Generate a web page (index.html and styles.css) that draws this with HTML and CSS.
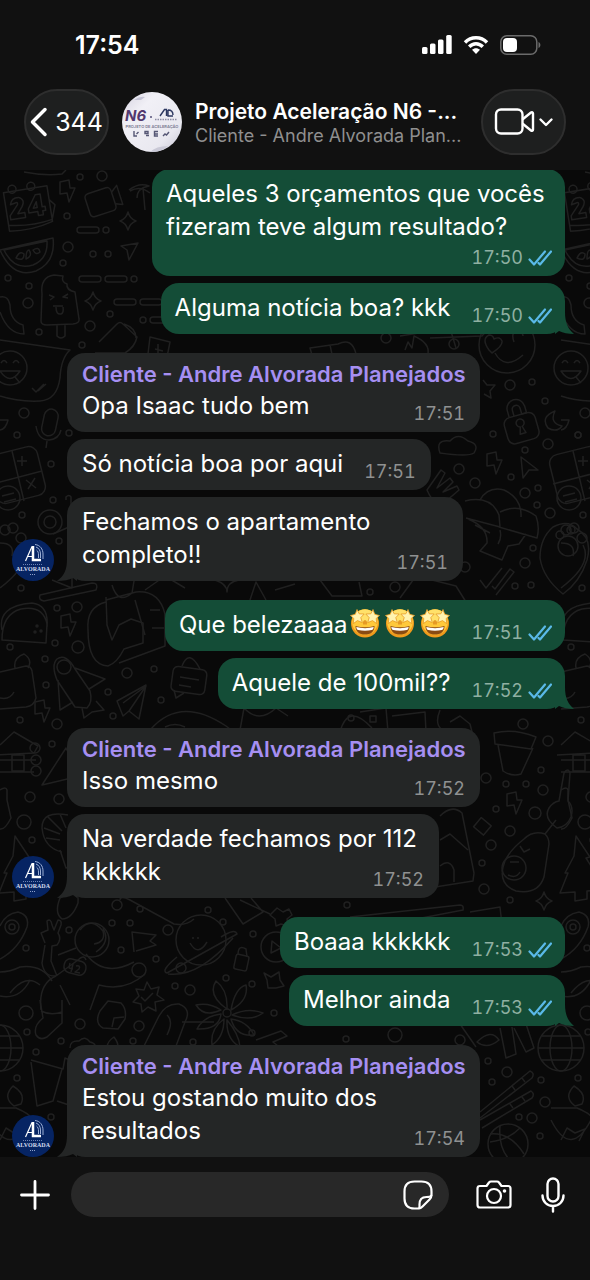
FILE: index.html
```
<!DOCTYPE html>
<html lang="pt-BR">
<head>
<meta charset="UTF-8">
<meta name="viewport" content="width=device-width, initial-scale=1.0">
<title>Projeto Aceleração N6</title>
<link rel="stylesheet" href="styles.css">
</head>
<body>

<!-- shared symbols -->
<svg class="defs" aria-hidden="true">
    <symbol id="checks" viewBox="0 0 24 16">
        <path d="M1.500 9.500l4.500 5L17 1.500M10.500 13l1.500 1.500L23 1.500" fill="none" stroke="#5ab9e8" stroke-width="2.200" stroke-linecap="round" stroke-linejoin="round"/>
    </symbol>
    <symbol id="tail-out" viewBox="0 0 20 22">
        <path d="M10 0C10 11 13 17 19 22C13 22 8 21 4 19L0 22V0z" fill="#144d37"/>
    </symbol>
    <symbol id="tail-in" viewBox="0 0 20 22">
        <path d="M10 0C10 11 7 17 0 22C7 22 12 21 16 19L20 22V0z" fill="#242626"/>
    </symbol>
    <symbol id="alvorada" viewBox="0 0 42 42">
        <circle cx="21" cy="21" r="21" fill="#062463"/>
        <g fill="none" stroke="#fff">
            <path d="M13.500 22L20 7.500" stroke-width="1.200"/>
            <path d="M16 17.500h4.500" stroke-width="1"/>
            <path d="M21 7v14h8" stroke-width="2.500"/>
            <path d="M23 5.500c5 .5 8 4.500 8 9.500v5M24 8c3 1 4.500 4 4.500 7v4M24.500 11c1.500 1 2 3 2 5v3" stroke-width="1" stroke="#9db0d6"/>
            <path d="M11 25.500h20" stroke-width="1" stroke="#6d83b5" stroke-dasharray="1 1"/>
            <path d="M18 35.500h6" stroke-width="1" stroke="#8ea1cb" stroke-dasharray="1 1"/>
        </g>
        <text x="21" y="32" text-anchor="middle" class="logo-word">ALVORADA</text>
    </symbol>
    <symbol id="starstruck" viewBox="0 0 30 30">
        <circle cx="15" cy="15.500" r="14" fill="#f09a1c"/>
        <circle cx="15" cy="14" r="12.800" fill="#ffc93b"/>
        <ellipse cx="15" cy="8" rx="9.500" ry="6.500" fill="#ffe16a"/>
        <path d="M5.500 18c6 1.800 13 1.800 19 0c0 6-4 8.500-9.500 8.500s-9.500-2.500-9.500-8.500z" fill="#8a4a12"/>
        <path d="M6.300 19c5.500 1.500 12 1.500 17.400 0c-.2 2-1 2.800-2 3c-4 1-9.400 1-13.400 0c-1-.2-1.800-1-2-3z" fill="#fff"/>
        <path d="M13 13.500q2-3 4 0v3h-4z" fill="#e69a25"/>
        <g fill="#fff3b0" stroke="#e69a25" stroke-width=".8" stroke-linejoin="round">
            <path d="M7 1.500l2.200 4.300 5 .2-3.400 3.600 1.500 5-4.800-2-4.200 3 .5-5.200L.5 7.500l4.800-1.200z"/>
            <path d="M23 1.500l-2.200 4.300-5 .2 3.400 3.600-1.500 5 4.800-2 4.200 3-.5-5.200 3.300-2.900-4.800-1.200z"/>
        </g>
    </symbol>
</svg>

<header class="top">
    <div class="status">
        <time class="clock">17:54</time>
        <div class="status-icons">
            <svg width="30" height="20" viewBox="0 0 30 20" fill="#fff" aria-hidden="true">
                <rect x="0" y="12" width="5.500" height="7" rx="1.500"/>
                <rect x="8" y="8.500" width="5.500" height="10.500" rx="1.500"/>
                <rect x="16" y="4.500" width="5.500" height="14.500" rx="1.500"/>
                <rect x="24.200" y="0" width="5.500" height="19" rx="1.500"/>
            </svg>
            <svg width="26" height="20" viewBox="0 0 26 20" aria-hidden="true">
                <path d="M2 7.500C8 1.200 18 1.200 24 7.500M6.200 11.800c4-4 9.600-4 13.600 0" fill="none" stroke="#fff" stroke-width="3.400"/>
                <path d="M13 19l-4-4.200c2.200-2.200 5.800-2.200 8 0z" fill="#fff"/>
            </svg>
            <svg width="41" height="20" viewBox="0 0 41 20" aria-hidden="true">
                <rect x=".8" y=".8" width="36" height="18.400" rx="6" fill="none" stroke="#6b6b6b" stroke-width="1.500"/>
                <rect x="3" y="3" width="14" height="14" rx="4" fill="#fff"/>
                <path d="M38.500 7v6c2.500-.8 2.500-5.200 0-6z" fill="#6b6b6b"/>
            </svg>
        </div>
    </div>
    <div class="bar">
        <button class="pill back" type="button" aria-label="Voltar">
            <svg width="18" height="30" viewBox="0 0 18 30" aria-hidden="true"><path d="M15 2.500L2.500 15L15 27.500" fill="none" stroke="#fff" stroke-width="3.500" stroke-linecap="round" stroke-linejoin="round"/></svg>
            <span>344</span>
        </button>
        <svg class="group-pic" viewBox="0 0 60 60" role="img" aria-label="Foto do grupo">
            <defs>
                <linearGradient id="sheen" x1="0" y1="0" x2="1" y2="1">
                    <stop offset="0" stop-color="#d5d3e0"/>
                    <stop offset=".3" stop-color="#f1f0f6"/>
                    <stop offset=".75" stop-color="#e9e8f0"/>
                    <stop offset="1" stop-color="#c6c5d3"/>
                </linearGradient>
            </defs>
            <circle cx="30" cy="30" r="30" fill="url(#sheen)"/>
            <path d="M12 8q6-4 11-3l-4 3z" fill="#c3c2d4"/>
            <path d="M28 60q6-6 18-6-6 6-18 6z" fill="#c9c8d6"/>
            <text x="3" y="29" class="pic-n6">N6</text>
            <circle cx="29" cy="25" r="1" fill="#55507a"/>
            <path d="M38 24l4.500-6.500h2V24M46 18v6h5M46 18c3.500 0 5 2 5 5" fill="none" stroke="#2c3760" stroke-width="1.400"/>
            <path d="M33 27.500h22" stroke="#8d8da5" stroke-width="1.500" stroke-dasharray="1.500 1"/>
            <text x="30" y="36" text-anchor="middle" class="pic-line">PROJETO DE ACELERAÇÃO</text>
            <g fill="none" stroke="#565775" stroke-width="1.400">
                <path d="M12 39v5h3M14.500 42l2-2"/><path d="M23 39.500h3v2h-3zM24 43.500h3"/><path d="M36 39.500h-3.500v4.500H36M33 42h3"/><path d="M41 44l2-2 1.500 1 2.500-3"/>
            </g>
        </svg>
        <div class="titles">
            <h1>Projeto Aceleração N6 -...</h1>
            <p>Cliente - Andre Alvorada Plan...</p>
        </div>
        <button class="pill call" type="button" aria-label="Chamada de vídeo">
            <svg width="60" height="30" viewBox="0 0 60 30" fill="none" stroke="#fff" stroke-width="2.400" stroke-linecap="round" stroke-linejoin="round" aria-hidden="true">
                <rect x="2" y="2.500" width="26.500" height="24" rx="5"/>
                <path d="M29 12l8-6.500c1-.8 2-.3 2 1v16c0 1.300-1 1.800-2 1L29 17"/>
                <path d="M46.500 12.500l5.500 5.500 5.500-5.500"/>
            </svg>
        </button>
    </div>
</header>

<main class="chat">
    <!-- doodle wallpaper, repeats every 561px -->
    <svg class="wallpaper" aria-hidden="true">
        <defs>
            <path id="bolt" d="M-6-10l9-2 1 8 5 0-6 14-2-9-7 1z"/>
            <path id="spark" d="M0-9q2 7 8 9q-6 2-8 9q-2-7-8-9q6-2 8-9z"/>
            <path id="tick" d="M-18 3l6 8L4-9M-6 9l3 3L12-8l4 3L-2 18"/>
            <g id="padlock"><rect x="-16" y="-4" width="32" height="27" rx="7"/><path d="M-9-4v-7a9 9 0 0118 0v7h-5v-6a4 4 0 00-8 0v6M-3 15l2-7a4 4 0 112 0l2 7z"/></g>
            <g id="smile"><circle r="17"/><path d="M-9-5q3-5 6 0M3-5q3-5 6 0M-10 3q10 15 20 0zM5 9l5 6"/></g>
            <g id="tile">
                <g transform="translate(28 207) rotate(-9)"><path d="M-22-18h44v36q-21 6-44 3zM-22 15q22 5 44 1l5-14-5-6"/><circle cx="-13" cy="-20" r="4"/><circle cx="6" cy="-20" r="4"/><path d="M-17-5q2-7 9-6q7 3 2 10l-5 6h7v5h-15v-4l9-10q1-3-2-2zM9-11h5v13h3v4h-3v4h-5v-4H0V2zM9-4L5 2h4z"/></g>
                <use href="#bolt" x="66" y="192"/>
                <g transform="translate(101 202) rotate(-18)"><rect x="-14" y="-12" width="27" height="24" rx="4"/><path d="M13-6l7-5v20l-7-3"/></g>
                <path d="M24 172q20 4 38 2l4-4M129 190q10-8 20-4q-12 2-12 12M130 191q10-6 20 2M145 210l-2-22"/>
                <use href="#spark" x="128" y="221"/>
                <rect x="77" y="227" width="22" height="6" rx="3"/><circle cx="106" cy="230" r="3"/>
                <path d="M121 246l17-3-9 17-2-10z"/>
                <path d="M0 250l53-12q3 24-17 33Q13 279 0 250zM4 250l43-9q1 18-14 24q-19 6-29-15z"/>
                <path d="M16 258q4-8 8-4q0 8-8 4zM26 259q0-9 3-9q4 6-3 9zM33 250q6-4 7 2q-4 4-7-2z"/>
                <rect x="79" y="276" width="22" height="6" rx="3"/><rect x="105" y="276" width="22" height="6" rx="3"/><circle cx="134" cy="279" r="3"/>
                <rect x="114" y="299" width="22" height="6" rx="3"/><rect x="140" y="299" width="22" height="6" rx="3"/><circle cx="143" cy="320" r="3"/><rect x="150" y="317" width="22" height="6" rx="3"/>
                <path d="M42 294q-2-17 12-19l9 1q-2 6 4 8q-1 6 8 8l4 27q1 4-6 5l-26 1q-6 0-6-4zM57 325v11q4 4 8 0v-12"/>
                <path d="M49 295l5 2-4 3M68 294l-5 3 5 1M53 306h10M56 307q0 8 5 7q3-1 2-7"/>
                <use href="#spark" x="93" y="301"/>
                <path d="M0 297q8-2 10 8q0 16 13 20l1 9Q8 334 0 312"/>
                <path d="M99 342l18-18q3-3 6 0l14 13q-2 10-12 16l-30 0M124 324q12 4 12 14M150 337l20 5-4 20h-19zM158 344v12M155 349l8 2"/>
                <path d="M0 340q35 5 70 10q-9 8-10 28q-3 22-20 23Q18 402 0 396"/><use href="#smile" x="10" y="368"/><path d="M32 388l4 4 8-8M38 391l8-7"/>
                <rect x="43" y="409" width="14" height="27" rx="7" transform="rotate(12 50 422)"/><path d="M36 426q2 14 13 14q10-1 12-10M47 441l-1 7M0 420h8q-2 9-8 10"/>
                <rect x="-8" y="450" width="50" height="50" rx="9" transform="rotate(-14 17 475)"/><path d="M12 451l12 50M-8 484l50-13M17 461h10M22 456v10M26 480l10 8M35 478l-7 11"/>
                <circle cx="8" cy="498" r="12"/><path d="M2 496l12-3M4 502l12-3"/>
                <circle cx="50" cy="522" r="12"/><circle cx="50" cy="522" r="6"/><path d="M53 534l16-7M66 500v-3q3-3 5 0v15M0 588q32-24 22-43"/>
                <circle cx="5" cy="530" r="5"/><circle cx="13" cy="528" r="5"/><circle cx="21" cy="538" r="5"/><path d="M0 543q15 0 12 13"/>
                <path d="M2 640q0-26 19-31q22-4 26 15l-1 19zM2 630q-5-24 30-27q17 2 15 24"/><circle cx="37" cy="626" r="1"/><circle cx="35" cy="632" r="1"/><circle cx="41" cy="631" r="1"/>
                <path d="M40 595l52-12q7 0 4 7l-52 11q-6-1-4-6zM52 580l20 8v-12"/>
                <use href="#bolt" x="67" y="626"/>
                <path d="M106 602q-20 5-18 28q0 35 20 36q9-3 16-17l19-6v-20l-12-4-12 6-7 15-5-15-1-28M106 600l30-8q23-2 29 22v32l-46 17M112 585q6 20 20 8l2-12"/><path d="M135 600l10 35M150 610h10M152 628h12"/>
                <path d="M57 659q9-6 18 10l15 22q3 11-3 17l-12-1-18-27q-6-15 0-21zM75 668l30 11-16 10M58 680l2 30 13-8M82 708l2 10 8-6 12-2-8-9"/><circle cx="64" cy="667" r="7"/>
                <path d="M117 701l29-16-7 34-10-8-6 5zM129 711l17-25-23 17"/>
                <rect x="172" y="668" width="34" height="25" rx="5" transform="rotate(8 189 680)"/><path d="M180 677l19 3M179 685l12 2M182 666q7-18 18 3M174 690l2 8 8-5"/>
                <path d="M0 672l26-6q5 0 6 5l4 27q-2 8-10 9L0 709M0 698q10 2 14-6M15 668q-2-10 9-14q9 6 4 14"/>
                <use href="#bolt" x="41" y="712"/>
                <path d="M0 745l14-13 24 14-4 7-38 2M36 760H0M34 772H0M12 755h12v16H12zM42 785l24-37 14 28z"/><circle cx="35" cy="748" r="5"/><circle cx="36" cy="760" r="5"/><circle cx="36" cy="771" r="5"/>
                <path d="M0 790q6-4 7 0v10l4 18Q5 830 0 829M15 836l14 21-4 1 10 16-5 1 10 15-14 1v8l-12 2v-9l-15 1 8-20-3 0 9-17z"/>
                <path d="M68 815q-26-5-26 13q2 20 20 24M48 817l14 14M60 814l6 14M44 828l16 6M46 838l14 2M60 850l6 18 10-2M60 898q20-12 18 5q-6 16-16 16q-8-6-2-21z"/>
                <path d="M0 926q5-12 18-14q12 3 9 15q-8 22-27 32"/><circle cx="12" cy="927" r="7"/><circle cx="12" cy="927" r="3"/>
                <path d="M45 943l-4-10 7-3-1-9q4-3 5 4l2 5 4-10q4 0 3 5l-3 8q4 6-1 12l-5 1-1 15 6 15M45 945l-3 18q2 14 14 13M58 955l18-7M56 976l22-16q6-6 8 0"/><circle cx="92" cy="940" r="17"/><path d="M80 930q11-14 23 1q3 11-9 13M103 928q8 14-7 24"/>
                <rect x="64" y="960" width="22" height="14" rx="6" transform="rotate(15 75 967)"/><path d="M70 963l-1 5 4 1M73 964l-2 8M76 966q5-1 3 3l-4 3 5 1"/>
                <path d="M86 954q18 24 48 8M134 952l-2-20 24 3-6 6 6 4-20 6"/><circle cx="139" cy="970" r="7"/><path d="M145 974q-20 18-46 11l-9 25M56 976q-18 8-15 34M40 985q-14-12-30 8M0 972q10 0 20-5q22-3 32 14M30 980q-10 20-30 16M60 985l10 20"/>
                <circle cx="201" cy="940" r="25"/><path d="M193 937v2M198 937v2M190 943q8 14 17-1M177 957q-17 14-10 16l70-39q-2-6-16 3M168 974q30 4 65-36"/><circle cx="181" cy="968" r="5"/>
                <rect x="235" y="955" width="13" height="15" rx="2" transform="rotate(12 241 962)"/><path d="M238 955q0-11 8-6l1 8"/>
                <circle cx="276" cy="947" r="15"/><path d="M272 941l9 7-10 5zM264 973l7 4 8-5 1 8 4 6-8 2-8 0-1-8z"/>
                <path d="M147 982l4 7 8-2-2 8 7 5-9 2 1 9-8-4-6 5-1-8-8-2 6-6-3-7 8 1zM141 997l4 4 8-8"/>
                <g transform="translate(227 1013)"><path d="M0-4q-20-14-11-28q12 9 11 28zM4-3q4-22 15-25q3 15-15 25zM5 2q16-8 31-2q-12 9-31 2zM4 6q16 2 23 16q-18 2-23-16zM0 7q12 14 13 27q-14-8-13-27zM-3 6q0 18-12 26q-2-16 12-26zM-6 1q-17 2-24 15q22 1 24-15zM-6-3q-12-8-25-5q8 13 25 5z"/><circle r="4"/></g>
                <path d="M40 1000l3 18q-10 8-7 17q4 6 11 2l15-14V1000M41 1011q10 5 21 1M100 1011l8-10 13 2q6 6 4 16l-7 10-15-1q-9-5-3-17zM112 1027l2-9 10-1"/>
                <path d="M70 1048q0-8 9-7q6-6 11 1q8 2 4 8M108 1050q-3-7 6-13q6 8 3 13M144 1046l15-30q7-13 20-12q13 5 6 18l-9 24M167 1015q7 6 0 20M31 1060l32 9 2-11 12 5M31 1062l6 44 16-5 9-32M57 1101l12 4"/>
                <circle cx="0" cy="1048" r="23"/><ellipse cx="0" cy="1048" rx="11" ry="23"/><path d="M-23 1048h46M-19 1036h38M-19 1060h38"/>
                <path d="M-10 1108h26q14 6 15 10Q10 1160-10 1120M14 1106q-12-9-1-20q13 8 8 18zM0 1140l6-12 8 5 10-4-6 12"/>
                <path d="M182 1022h32M256 1040l25-9 6 5-14 6 10 8M460 1024l16 23"/>
                <path d="M240 900l30 14M130 900l44 24q12 2 20-5M120 900q0-5 10 0M225 898l18 26 20-12-12-14M350 917l110-12q4 0 3 5l-83 16M470 912l30-5 2 18"/>
                <path d="M277 908l6 4 6-3 3 6-5 4 1 7-7-2-5 2-1-7-5-4z"/>
                <path d="M150 730q30-35 76-4l8 6M165 727q10-5 20 0M240 730l4-22q15 16 32 0l12 8M340 732q8-30 32-4M360 712l26-4 2 24M392 716l33-4 1 20M370 716h6v6h-6zM440 710q-8 20 10 22M450 722l10-6 10 8 2 8"/>
                <!-- right column -->
                <path d="M430 338l52-2q10-10-6-14M400 336l50-8 6 20M310 348l28-4q14-7 18 10l-42 8zM330 345l3 14M405 350l3-8 4 6 2-12q16 7 14 18"/>
                <circle cx="507" cy="345" r="28"/><path d="M489 350q-8-11 0-15q4 0 5 4q6-3 8 2q1 5-10 12zM514 342q-4-11 5-11q4 2 4 5M495 353q10 18 28 2"/>
                <path d="M483 380l4 5 8 0-5 6 1 7-7-4"/>
                <g transform="translate(519 419) rotate(-16)"><use href="#padlock"/></g>
                <path d="M555 411q-6 12 7 15q-5 7-14 2q-8-11 7-17zM440 453q-5-14 10-12q8-9 18 0q12 3 6 12q-6 4-34 0z"/>
                <use href="#bolt" x="493" y="464"/><path d="M521 457l17 13-9 0-6 8z"/>
                <path d="M427 490l14-20 4 3-8 15 13-10 3 4-10 10 14-6 2 4-14 12q-9 8-18-12z"/>
                <path d="M465 501q26-6 34 14l1 12-34-9M480 500q8-14 24-10q18 8 17 27M500 512q18-9 36 4q4 11 1 22l-38-11M468 519q20 8 19 24l-7 8 22 9 6-14 11-2 7-10M475 525l15 8M500 530q2 8-2 14"/>
                <path d="M540 558q0-20 13-31q15-8 24 2q16 9 10 31q-7 22-24 34q-20-16-23-36z"/><circle cx="568" cy="546" r="10"/><circle cx="560" cy="535" r="4"/><circle cx="571" cy="530" r="4"/>
                <use href="#tick" x="498" y="577"/>
                <path d="M320 580l12 16h30l-3-14M400 598l16-22 40 10 10 16M145 590l20-14 20 12M215 580q12 4 12 12q0-10 12-12M250 600l6-18 10 18M275 590l20-6"/>
                <path d="M494 733q20-5 42 4l-5 12-36-5zM498 745l5 26q9 6 18 3l12-26"/>
                <path d="M557 828q-14-10-8-20q4-6 10-7l5-28q4-6 6 0l-2 28q6 6 3 16q-4 10-14 11zM556 820l-11 14M545 834q-12-4-21 5q-18 14-21 28q-4 18 13 24q22 4 28-14l5-33q0-6-4-10z"/><circle cx="514" cy="868" r="12"/><path d="M520 846l4 6 6-3M510 862h9M508 875q8 4 12-3"/>
                <rect x="476" y="820" width="13" height="12" transform="rotate(40 482 826)"/>
                <use href="#bolt" x="513" y="804"/><use href="#spark" x="544" y="901"/>
                <path d="M440 816q12-12 22-3l12 60-1 8-38 6M440 840l10-6 18 16M440 866q10-8 14 4v12"/>
                <path d="M500 1028l6 30 10-4-4-27M514 1028l12 24 8-4-9-27M477 1042q14-14 22-2q-12 10-22 2z"/>
                <path d="M480 1112l50-41q5 2 2 7l-52 40M480 1120l51-29q4 3 1 7l-50 30M512 1086l3 4M522 1078l3 4M510 1104l3 4M522 1097l3 4"/>
                <circle cx="508" cy="1144" r="20"/><path d="M490 1134q20-2 34 20M500 1126q-2 24 12 36M520 1128q-12 12-30 14"/>
            </g>
            <g id="dots">
                <circle cx="80" cy="177" r="3"/><circle cx="102" cy="176" r="5"/><circle cx="67" cy="216" r="3"/><circle cx="68" cy="247" r="5"/><circle cx="93" cy="254" r="3"/><circle cx="108" cy="254" r="3"/><circle cx="63" cy="263" r="3"/><circle cx="8" cy="278" r="3"/><circle cx="29" cy="286" r="3"/><circle cx="28" cy="303" r="5"/><circle cx="39" cy="332" r="3"/><circle cx="110" cy="314" r="3"/><circle cx="90" cy="326" r="5"/><circle cx="82" cy="345" r="3"/><circle cx="24" cy="413" r="5"/><circle cx="17" cy="435" r="3"/><circle cx="69" cy="433" r="3"/>
                <circle cx="51" cy="464" r="3"/><circle cx="53" cy="500" r="3"/><circle cx="22" cy="515" r="3"/><circle cx="59" cy="541" r="3"/><circle cx="21" cy="588" r="3"/><circle cx="57" cy="608" r="3"/><circle cx="77" cy="607" r="5"/><circle cx="10" cy="647" r="3"/><circle cx="55" cy="643" r="3"/><circle cx="78" cy="647" r="6"/><circle cx="45" cy="659" r="3"/><circle cx="46" cy="685" r="3"/><circle cx="127" cy="673" r="5"/><circle cx="154" cy="669" r="3"/><circle cx="108" cy="692" r="3"/><circle cx="113" cy="716" r="3"/><circle cx="161" cy="700" r="3"/><circle cx="57" cy="724" r="5"/><circle cx="20" cy="720" r="3"/>
                <circle cx="52" cy="744" r="3"/><circle cx="30" cy="797" r="5"/><circle cx="59" cy="799" r="5"/><circle cx="24" cy="822" r="7"/><circle cx="32" cy="840" r="3"/><circle cx="117" cy="905" r="5"/><circle cx="140" cy="909" r="3"/><circle cx="112" cy="923" r="3"/><circle cx="130" cy="923" r="3"/><circle cx="69" cy="930" r="3"/><circle cx="168" cy="930" r="5"/><circle cx="208" cy="910" r="3"/><circle cx="223" cy="922" r="3"/><circle cx="121" cy="950" r="3"/><circle cx="156" cy="959" r="3"/><circle cx="26" cy="948" r="3"/><circle cx="175" cy="986" r="3"/><circle cx="190" cy="990" r="5"/><circle cx="226" cy="978" r="3"/><circle cx="252" cy="984" r="3"/><circle cx="253" cy="934" r="3"/>
                <circle cx="26" cy="1013" r="7"/><circle cx="80" cy="1024" r="5"/><circle cx="27" cy="1032" r="3"/><circle cx="61" cy="1041" r="3"/><circle cx="36" cy="1052" r="3"/><circle cx="139" cy="1026" r="5"/><circle cx="133" cy="1041" r="3"/><circle cx="193" cy="1042" r="3"/><circle cx="252" cy="1033" r="3"/><circle cx="274" cy="1013" r="3"/><circle cx="17" cy="1078" r="3"/><circle cx="51" cy="1117" r="3"/><circle cx="395" cy="1035" r="7"/><circle cx="346" cy="1039" r="3"/><circle cx="460" cy="1040" r="5"/>
                <circle cx="386" cy="338" r="5"/><circle cx="454" cy="344" r="5"/><circle cx="510" cy="385" r="5"/><circle cx="532" cy="382" r="3"/><circle cx="545" cy="401" r="3"/><circle cx="493" cy="434" r="3"/><circle cx="578" cy="435" r="3"/><circle cx="548" cy="444" r="5"/><circle cx="459" cy="469" r="5"/><circle cx="475" cy="483" r="5"/><circle cx="511" cy="477" r="3"/><circle cx="525" cy="450" r="3"/><circle cx="525" cy="493" r="5"/><circle cx="538" cy="488" r="3"/><circle cx="537" cy="505" r="3"/><circle cx="550" cy="513" r="5"/><circle cx="533" cy="548" r="3"/><circle cx="525" cy="563" r="5"/><circle cx="515" cy="586" r="3"/><circle cx="531" cy="585" r="3"/><circle cx="395" cy="587" r="5"/><circle cx="370" cy="592" r="3"/><circle cx="465" cy="567" r="5"/>
                <circle cx="351" cy="718" r="3"/><circle cx="523" cy="724" r="5"/><circle cx="548" cy="741" r="5"/><circle cx="541" cy="770" r="3"/><circle cx="486" cy="778" r="5"/><circle cx="506" cy="784" r="3"/><circle cx="526" cy="784" r="3"/><circle cx="543" cy="790" r="5"/><circle cx="496" cy="809" r="3"/><circle cx="535" cy="813" r="6"/><circle cx="510" cy="831" r="5"/><circle cx="491" cy="845" r="5"/><circle cx="482" cy="863" r="3"/><circle cx="484" cy="889" r="5"/><circle cx="510" cy="900" r="3"/><circle cx="347" cy="905" r="3"/>
                <circle cx="488" cy="1061" r="3"/><circle cx="507" cy="1072" r="5"/><circle cx="492" cy="1082" r="3"/><circle cx="541" cy="1080" r="3"/><circle cx="545" cy="1102" r="5"/><circle cx="519" cy="1117" r="3"/><circle cx="532" cy="1118" r="5"/><circle cx="540" cy="1136" r="3"/>
            </g>
        </defs>
        <g transform="translate(0 -170)">
            <use href="#tile"/><use href="#dots"/>
            <use href="#tile" x="561"/><use href="#dots" x="561"/>
        </g>
    </svg>

    <div class="messages">
        <div class="row out">
            <div class="bubble full">
                <p>Aqueles 3 orçamentos que vocês<br>fizeram teve algum resultado?</p>
                <span class="meta below">17:50 <svg class="checks"><use href="#checks"/></svg></span>
            </div>
        </div>
        <div class="row out">
            <div class="bubble">
                <p>Alguma notícia boa? kkk <span class="meta">17:50 <svg class="checks"><use href="#checks"/></svg></span></p>
                <svg class="tail"><use href="#tail-out"/></svg>
            </div>
        </div>

        <div class="row in first">
            <div class="bubble full">
                <h2>Cliente - Andre Alvorada Planejados</h2>
                <p>Opa Isaac tudo bem <span class="meta">17:51</span></p>
            </div>
        </div>
        <div class="row in">
            <div class="bubble">
                <p>Só notícia boa por aqui <span class="meta">17:51</span></p>
            </div>
        </div>
        <div class="row in">
            <svg class="avatar" role="img" aria-label="Alvorada"><use href="#alvorada"/></svg>
            <div class="bubble roomy">
                <p>Fechamos o apartamento<br>completo!! <span class="meta">17:51</span></p>
                <svg class="tail"><use href="#tail-in"/></svg>
            </div>
        </div>

        <div class="row out first">
            <div class="bubble">
                <p>Que belezaaaa<span class="emojis" role="img" aria-label="🤩🤩🤩"><svg><use href="#starstruck"/></svg><svg><use href="#starstruck"/></svg><svg><use href="#starstruck"/></svg></span> <span class="meta">17:51 <svg class="checks"><use href="#checks"/></svg></span></p>
            </div>
        </div>
        <div class="row out">
            <div class="bubble">
                <p>Aquele de 100mil?? <span class="meta">17:52 <svg class="checks"><use href="#checks"/></svg></span></p>
                <svg class="tail"><use href="#tail-out"/></svg>
            </div>
        </div>

        <div class="row in first">
            <div class="bubble full">
                <h2>Cliente - Andre Alvorada Planejados</h2>
                <p>Isso mesmo <span class="meta">17:52</span></p>
            </div>
        </div>
        <div class="row in">
            <svg class="avatar" role="img" aria-label="Alvorada"><use href="#alvorada"/></svg>
            <div class="bubble snug">
                <p>Na verdade fechamos por 112<br>kkkkkk <span class="meta">17:52</span></p>
                <svg class="tail"><use href="#tail-in"/></svg>
            </div>
        </div>

        <div class="row out first">
            <div class="bubble">
                <p>Boaaa kkkkkk <span class="meta">17:53 <svg class="checks"><use href="#checks"/></svg></span></p>
            </div>
        </div>
        <div class="row out">
            <div class="bubble">
                <p>Melhor ainda <span class="meta">17:53 <svg class="checks"><use href="#checks"/></svg></span></p>
                <svg class="tail"><use href="#tail-out"/></svg>
            </div>
        </div>

        <div class="row in first">
            <svg class="avatar" role="img" aria-label="Alvorada"><use href="#alvorada"/></svg>
            <div class="bubble full">
                <h2>Cliente - Andre Alvorada Planejados</h2>
                <p>Estou gostando muito dos<br>resultados <span class="meta">17:54</span></p>
                <svg class="tail"><use href="#tail-in"/></svg>
            </div>
        </div>
    </div>
</main>

<footer class="composer">
    <button type="button" aria-label="Anexar">
        <svg width="30" height="30" viewBox="0 0 30 30" aria-hidden="true"><path d="M15 1.500v27M1.500 15h27" stroke="#fff" stroke-width="2.800" stroke-linecap="round"/></svg>
    </button>
    <div class="field">
        <input type="text" aria-label="Mensagem">
        <button type="button" aria-label="Figurinhas">
            <svg width="30" height="30" viewBox="0 0 30 30" fill="none" stroke="#fff" stroke-width="2.200" stroke-linejoin="round" aria-hidden="true">
                <path d="M16 28.500h-4.500q-10 0-10-10v-7q0-10 10-10h7q10 0 10 10V15c0 2-.5 3-2 4.500l-7 7c-1.300 1.300-2 2-3.500 2z"/>
                <path d="M16 28.500c.8-1 .5-2 .5-4 0-5 2-7.500 7-7.500 2.500 0 4.500 0 5-2"/>
            </svg>
        </button>
    </div>
    <button type="button" aria-label="Câmera">
        <svg width="36" height="30" viewBox="0 0 36 30" fill="none" stroke="#fff" stroke-width="2.200" stroke-linejoin="round" aria-hidden="true">
            <path d="M4 6h6.500l2.500-3.500q.8-1 2-1h6q1.200 0 2 1L25.500 6H32q2.500 0 2.500 2.500v16.500q0 2.500-2.500 2.500H4q-2.500 0-2.500-2.500V8.500Q1.500 6 4 6z"/>
            <circle cx="18" cy="16" r="7"/>
            <circle cx="28.500" cy="11" r="1.800" fill="#fff" stroke="none"/>
        </svg>
    </button>
    <button type="button" aria-label="Gravar áudio">
        <svg width="24" height="36" viewBox="0 0 24 36" fill="none" stroke="#fff" stroke-width="2.400" stroke-linecap="round" aria-hidden="true">
            <rect x="6.500" y="1.500" width="11" height="23" rx="5.500"/>
            <path d="M1.500 18.500c0 6 4.500 10.500 10.500 10.500s10.500-4.500 10.500-10.500M12 29v5.500"/>
        </svg>
    </button>
</footer>

</body>
</html>
```

FILE: styles.css
```
* {
    box-sizing: border-box;
}
body {
    margin: 0;
    height: 100vh;
    display: flex;
    flex-direction: column;
    background-color: #111;
    color: #fff;
    font-family: Inter, "Liberation Sans", sans-serif;
    overflow: hidden;
}
h1, h2, p {
    margin: 0;
}
svg {
    display: block;
    flex: none;
}
button {
    border: none;
    padding: 0;
    background: none;
    color: inherit;
    font: inherit;
    cursor: pointer;
}
.defs {
    position: absolute;
    width: 0;
    height: 0;
}

/* header */
.top {
    padding-bottom: 15px;
}
.status {
    display: flex;
    justify-content: space-between;
    align-items: center;
    height: 89px;
    padding: 0 49px 0 75px;
}
.clock {
    font-size: 25px;
    font-weight: 600;
}
.status-icons {
    display: flex;
    gap: 11px;
}
.bar {
    display: flex;
    align-items: center;
    padding: 0 24px;
}
.pill {
    display: flex;
    align-items: center;
    justify-content: center;
    flex: none;
    width: 85px;
    height: 66px;
    border: 2px solid #2e2e2e;
    border-radius: 33px;
    background-color: #1e1f1f;
}
.back {
    gap: 7px;
    font-size: 25px;
}
.group-pic {
    width: 60px;
    height: 60px;
    margin: 0 13px;
}
.pic-n6 {
    font: italic 700 15px Inter, sans-serif;
    fill: #52396f;
}
.pic-line {
    font: 600 4px Inter, sans-serif;
    fill: #77778f;
}
.titles {
    flex: 1;
    min-width: 0;
    padding-top: 4px;
    white-space: nowrap;
}
.titles h1 {
    font-size: 21px;
    line-height: 24px;
    font-weight: 600;
}
.titles p {
    font-size: 18px;
    line-height: 24px;
    color: #8f8f8f;
}

/* conversation */
.chat {
    position: relative;
    flex: 1;
    min-height: 0;
    overflow: hidden;
    background-color: #090909;
}
.wallpaper {
    position: absolute;
    top: 0;
    left: 0;
    width: 100%;
    height: 100%;
    fill: none;
    stroke: #202020;
    stroke-width: 1.5;
    stroke-linejoin: round;
}
.messages {
    position: relative;
    display: flex;
    flex-direction: column;
    gap: 7px;
    margin-top: -1px;
    padding: 0 25px 0 12px;
}
.row {
    display: flex;
    align-items: flex-end;
}
.row.first {
    margin-top: 12px;
}
.row.out {
    justify-content: flex-end;
}
.avatar {
    width: 42px;
    height: 42px;
    margin-right: -42px;
}
.logo-word {
    font: 700 6px "Liberation Serif", serif;
    fill: #d5ddf0;
}
.bubble {
    position: relative;
    max-width: 413px;
    padding: 8px 13px 10px 14px;
    border-radius: 18px;
    font-size: 24px;
    line-height: 33px;
    white-space: nowrap;
}
.out .bubble {
    background-color: #144d37;
}
.in .bubble {
    margin-left: 55px;
    padding: 8px 15px 10px;
    background-color: #242626;
}
.bubble.full {
    min-width: 413px;
}
.bubble.roomy {
    min-width: 396px;
}
.bubble.snug {
    min-width: 372px;
}
.bubble h2 {
    margin-bottom: 2px;
    font-size: 22px;
    line-height: 26px;
    font-weight: 600;
    color: #a68ff2;
}
.meta {
    float: right;
    display: flex;
    align-items: center;
    gap: 5px;
    margin: 15px 0 -2px 21px;
    font-size: 18px;
    line-height: 20px;
    font-variant-numeric: tabular-nums;
    color: #8f9191;
}
.out .meta {
    color: #8fb0a2;
}
.meta.below {
    margin-top: 5px;
}
.checks {
    width: 24px;
    height: 16px;
}
.emojis {
    display: inline-flex;
    gap: 5px;
    margin-left: 3px;
    vertical-align: -5px;
}
.emojis svg {
    width: 30px;
    height: 30px;
}
.tail {
    position: absolute;
    bottom: 0;
    width: 20px;
    height: 22px;
}
.out .tail {
    right: -10px;
}
.in .tail {
    left: -10px;
}

/* composer */
.composer {
    display: flex;
    align-items: center;
    padding: 15px 25px 63px 20px;
}
.field {
    display: flex;
    align-items: center;
    flex: 1;
    min-width: 0;
    height: 45px;
    margin: 0 27px 0 21px;
    padding: 0 16px 0 20px;
    border-radius: 23px;
    background-color: #282828;
}
.field input {
    flex: 1;
    min-width: 0;
    border: none;
    outline: none;
    background: none;
    color: #fff;
    font: inherit;
    font-size: 24px;
}
.composer > button:last-child {
    margin-left: 29px;
}
```
